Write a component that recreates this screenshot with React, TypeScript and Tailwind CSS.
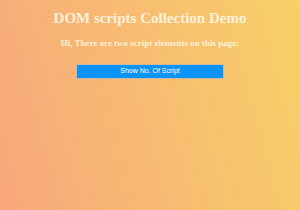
export default function App() {
  return (
    <main className="w-[300px] h-[210px] bg-[linear-gradient(75deg,#f8a77c,#f7d068)] flex flex-col items-center pt-[10px]">
      <h1 className="text-[15px] leading-[17px] font-bold text-[#fdf1d8] font-['Liberation_Serif',serif]">
        DOM scripts Collection Demo
      </h1>
      <p className="mt-[10px] text-[9px] leading-[12px] font-bold text-[#fdf1d8] font-['Liberation_Serif',serif]">
        Hi, There are two script elements on this page:
      </p>
      <button className="mt-[15px] w-[148px] h-[15px] bg-[#0b93f5] border border-[#c9b9a0] text-white text-[7px] font-['Liberation_Sans',sans-serif] flex items-center justify-center">
        Show No. Of Script
      </button>
    </main>
  );
}
